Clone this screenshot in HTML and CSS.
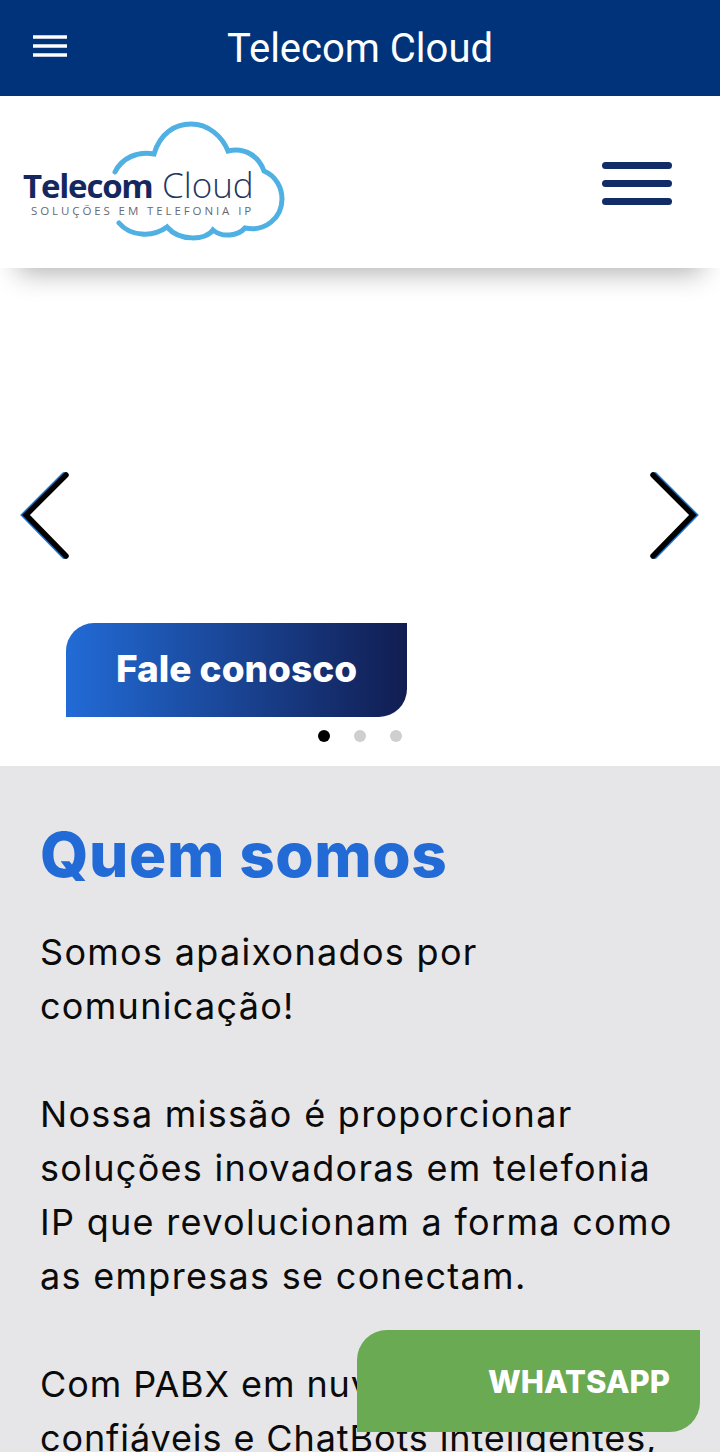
FILE: index.html
```html
<!DOCTYPE html>
<html lang="en">
<head>
    <meta charset="UTF-8">
    <title>Telecom Cloud</title>
    <link rel="stylesheet" href="styles.css">
</head>
<body>
    <header class="appbar">
        <svg class="appbar-menu" width="34" height="24" viewBox="0 0 34 24">
            <path d="M0 3H34M0 12H34M0 21H34" stroke="#fff" stroke-width="3.6" fill="none"/>
        </svg>
        <h1 class="appbar-title">Telecom Cloud</h1>
    </header>

    <div class="site-header">
        <svg class="logo" width="270" height="130" viewBox="20 116 270 130">
            <path class="logo-cloud" d="M115 172C122 158 137 151 154 154C160 133 175 124 191 124C208 124 222 136 228 151C246 147 259 157 264 171C276 176 282 188 282 199C282 218 265 232 245 228C238 236 222 238 213 230C206 240 180 242 167 227C152 238 130 236 119 223"/>
            <text class="logo-name" x="23" y="198">Telecom</text>
            <text class="logo-cloud-word" x="162" y="198">Cloud</text>
            <text class="logo-tagline" x="31" y="215">SOLUÇÕES EM TELEFONIA IP</text>
        </svg>
        <div class="site-menu">
            <span></span>
            <span></span>
            <span></span>
        </div>
    </div>

    <section class="hero">
        <svg class="arrow arrow-left" width="60" height="100" viewBox="0 0 60 100">
            <path class="arrow-blue" d="M49 9L9 49L49 90"/>
            <path class="arrow-black" d="M51 9L11 49L51 90"/>
        </svg>
        <svg class="arrow arrow-right" width="60" height="100" viewBox="0 0 60 100">
            <path class="arrow-blue" d="M11 9L51 49L11 90"/>
            <path class="arrow-black" d="M9 9L49 49L9 90"/>
        </svg>
        <a class="cta" href="#">Fale conosco</a>
        <div class="dots">
            <span class="dot active"></span>
            <span class="dot"></span>
            <span class="dot"></span>
        </div>
    </section>

    <section class="about">
        <h2>Quem somos</h2>
        <p>Somos apaixonados por<br>comunicação!</p>
        <p>Nossa missão é proporcionar<br>soluções inovadoras em telefonia<br>IP que revolucionam a forma como<br>as empresas se conectam.</p>
        <p class="tight">Com PABX em nuvem seguros e<br>confiáveis e ChatBots inteligentes,</p>
    </section>

    <a class="whatsapp" href="#">WHATSAPP</a>
</body>
</html>
```

FILE: styles.css
```css
body {
    margin: 0;
    height: 1452px;
    overflow: hidden;
    position: relative;
    background: #fff;
    font-family: Inter, sans-serif;
}
.appbar {
    height: 96px;
    background: #00337a;
    display: flex;
    align-items: center;
    justify-content: center;
    position: relative;
}
.appbar-menu {
    position: absolute;
    left: 33px;
    top: 34px;
}
.appbar-title {
    margin: 0;
    color: #fff;
    font-family: Roboto, sans-serif;
    font-size: 40px;
    font-weight: 400;
}
.site-header {
    height: 172px;
    padding: 20px 48px 0 20px;
    box-sizing: border-box;
    display: flex;
    justify-content: space-between;
    align-items: flex-start;
    background: #fff;
    box-shadow: 0 22px 26px -18px rgba(0,0,0,0.33);
    position: relative;
}
.logo {
    display: block;
}
.logo-cloud {
    fill: none;
    stroke: #4fb0e3;
    stroke-width: 5;
    stroke-linecap: round;
}
.logo-name {
    font-family: "Open Sans", sans-serif;
    font-size: 33px;
    font-weight: 700;
    letter-spacing: -1.2px;
    fill: #14285f;
}
.logo-cloud-word {
    font-family: "Open Sans", sans-serif;
    font-size: 35px;
    font-weight: 300;
    fill: #25365f;
}
.logo-tagline {
    font-family: "Open Sans", sans-serif;
    font-size: 11.5px;
    letter-spacing: 2.9px;
    fill: #666a75;
}
.site-menu {
    width: 70px;
    margin-top: 46px;
    display: flex;
    flex-direction: column;
    gap: 11px;
}
.site-menu span {
    height: 7px;
    border-radius: 4px;
    background: #122c68;
}
.hero {
    height: 498px;
    position: relative;
    padding: 355px 0 0 66px;
    box-sizing: border-box;
}
.arrow {
    position: absolute;
    top: 198px;
    fill: none;
}
.arrow-left {
    left: 15px;
}
.arrow-right {
    right: 16px;
}
.arrow-blue, .arrow-black {
    fill: none;
    stroke-width: 5.5;
    stroke-linecap: round;
    stroke-linejoin: miter;
}
.arrow-blue {
    stroke: #1f78d8;
}
.arrow-black {
    stroke: #000;
}
.cta {
    display: flex;
    align-items: center;
    justify-content: center;
    width: 341px;
    height: 94px;
    padding-bottom: 3px;
    box-sizing: border-box;
    border-radius: 28px 0 28px 0;
    background: linear-gradient(90deg, #226bd6, #111d51);
    color: #fff;
    font-size: 37px;
    font-weight: 800;
    text-decoration: none;
}
.dots {
    display: flex;
    gap: 24px;
    margin: 13px 0 0 252px;
}
.dot {
    width: 12px;
    height: 12px;
    border-radius: 50%;
    background: #cfcfcf;
}
.dot.active {
    background: #000;
}
.about {
    height: 686px;
    background: #e6e6e8;
    padding: 50px 40px 0;
    box-sizing: border-box;
    color: #0b0b0b;
}
.about h2 {
    margin: 0 0 31px;
    color: #226bd6;
    font-size: 62px;
    line-height: 78px;
    font-weight: 800;
    letter-spacing: 0.6px;
}
.about p {
    margin: 0 0 54px;
    font-size: 36px;
    line-height: 54px;
    letter-spacing: 1.3px;
}
.about p.tight {
    letter-spacing: 0.9px;
}
.whatsapp {
    position: absolute;
    left: 357px;
    top: 1330px;
    width: 343px;
    height: 102px;
    padding-right: 30px;
    box-sizing: border-box;
    display: flex;
    align-items: center;
    justify-content: flex-end;
    border-radius: 30px 0 30px 0;
    background: #6aaa52;
    color: #fff;
    font-size: 31px;
    font-weight: 800;
    text-decoration: none;
}
```
